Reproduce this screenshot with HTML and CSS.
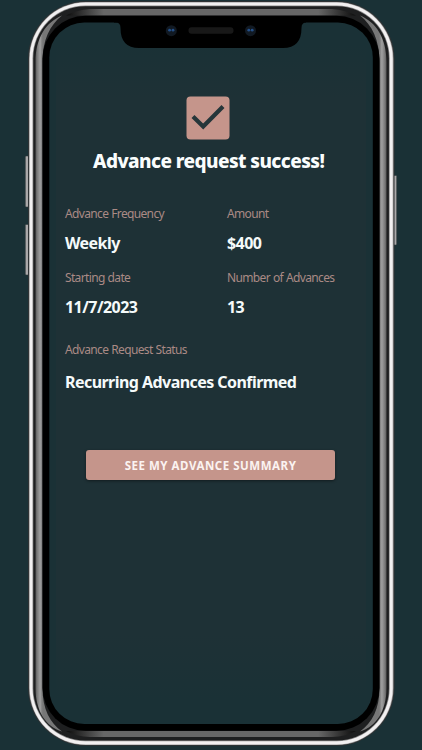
FILE: index.html
```html
<!DOCTYPE html>
<html lang="en">
<head>
  <meta charset="UTF-8" />
  <meta name="viewport" content="width=device-width, initial-scale=1.0"/>
  <title>Advance request success</title>
  <link rel="stylesheet" href="styles.css">
</head>
<body>

  <!-- Phone body -->
  <svg class="phone" viewBox="0 0 422 750" aria-hidden="true">
    <defs>
      <linearGradient id="side" gradientUnits="userSpaceOnUse" x1="35" x2="43" y1="0" y2="0">
        <stop offset="0" stop-color="#4c4c4c"/>
        <stop offset="0.25" stop-color="#777"/>
        <stop offset="0.65" stop-color="#a0a0a0"/>
        <stop offset="0.85" stop-color="#828282"/>
        <stop offset="1" stop-color="#777"/>
      </linearGradient>
      <linearGradient id="rail" x1="0" x2="1" y1="0" y2="0">
        <stop offset="0" stop-color="#0c0c0c"/>
        <stop offset="0.13" stop-color="#676767"/>
        <stop offset="0.87" stop-color="#676767"/>
        <stop offset="1" stop-color="#0c0c0c"/>
      </linearGradient>
      <linearGradient id="panel" x1="0" x2="0" y1="0" y2="1">
        <stop offset="0" stop-color="#1a3136"/>
        <stop offset="0.08" stop-color="#1e3136"/>
        <stop offset="0.9" stop-color="#1e3136"/>
        <stop offset="1" stop-color="#1a3136"/>
      </linearGradient>
      <path id="sideband" d="M62 15.500C46 22 35.500 38 35.500 62V688C35.500 711 46 727 62 731.500C50 723 42.500 709 42.500 688V62C42.500 40 50 25 62 15.500Z"/>
    </defs>

    <!-- side buttons -->
    <g fill="#aaa9aa" stroke="#333a3c" stroke-width="0.6">
      <rect x="25.3" y="156" width="5" height="51" rx="1"/>
      <rect x="25.3" y="224.5" width="5" height="50.5" rx="1"/>
      <rect x="392" y="175.5" width="4.7" height="69.5" rx="1"/>
    </g>

    <!-- metal frame, outside in -->
    <rect x="28" y="1" width="366.5" height="744.8" rx="58" fill="#303335"/>
    <rect x="29" y="2" width="364.5" height="743" rx="57" fill="#9b9b9b"/>
    <rect x="29.7" y="2.5" width="363" height="742" rx="56" fill="#f2f0f1"/>
    <rect x="32.5" y="5.5" width="357.2" height="735.8" rx="53" fill="#8b8b8b"/>
    <rect x="33.3" y="6.2" width="355.6" height="734.3" rx="52" fill="#1e1f20"/>
    <path d="M90 9H332Q346 10 356 15.500H66Q76 10 90 9Z" fill="url(#rail)"/>
    <path d="M66 731H356Q346 736.500 332 737H90Q76 736.500 66 731Z" fill="url(#rail)"/>
    <use href="#sideband" fill="url(#side)"/>
    <use href="#sideband" fill="url(#side)" transform="translate(422 0) scale(-1 1)"/>
    <rect x="42.5" y="15.8" width="337" height="715" rx="43" fill="#000"/>

    <!-- screen -->
    <rect x="49.3" y="22.5" width="323.5" height="701.5" rx="35" fill="#1a3136"/>
    <rect x="56" y="45" width="310" height="655" fill="url(#panel)"/>

    <!-- notch -->
    <path d="M114 22.500H116Q120.500 22.500 120.500 28Q120.500 48 139 48H283Q301.500 48 301.500 28Q301.500 22.500 306 22.500V20H114Z" fill="#000"/>
    <rect x="188.5" y="27.3" width="45" height="6.5" rx="3" fill="#181818"/>
    <g fill="#111922">
      <circle cx="171.3" cy="30.7" r="5.5"/>
      <circle cx="250.5" cy="30.7" r="5.5"/>
    </g>
    <g fill="#234f89">
      <circle cx="169.6" cy="30.2" r="1.4"/>
      <circle cx="173" cy="30.2" r="1.4"/>
      <circle cx="248.8" cy="30.2" r="1.4"/>
      <circle cx="252.2" cy="30.2" r="1.4"/>
    </g>
  </svg>

  <main class="screen">
    <svg class="check" viewBox="0 0 44 44" aria-hidden="true">
      <rect x="0.5" y="0.5" width="43" height="43" rx="4" fill="#c5958b"/>
      <path d="M7 20.500L17.200 30.500L37 10.500" fill="none" stroke="#25363a" stroke-width="4.2"/>
    </svg>
    <h1>Advance request success!</h1>

    <div class="details">
      <div class="item">
        <div class="label">Advance Frequency</div>
        <div class="value">Weekly</div>
      </div>
      <div class="item">
        <div class="label">Amount</div>
        <div class="value">$400</div>
      </div>
      <div class="item">
        <div class="label">Starting date</div>
        <div class="value">11/7/2023</div>
      </div>
      <div class="item">
        <div class="label">Number of Advances</div>
        <div class="value">13</div>
      </div>
      <div class="item status">
        <div class="label">Advance Request Status</div>
        <div class="value">Recurring Advances Confirmed</div>
      </div>
    </div>

    <button class="summary-btn">SEE MY ADVANCE SUMMARY</button>
  </main>

</body>
</html>
```

FILE: styles.css
```css
body {
  margin: 0;
  width: 422px;
  height: 750px;
  overflow: hidden;
  background: #1a3136;
  font-family: "Noto Sans", "Open Sans", sans-serif;
}
/* the phone lies behind the screen content */
.phone {
  position: absolute;
  top: 0;
  left: 0;
  width: 422px;
  height: 750px;
  z-index: -1;
}
.screen {
  display: flex;
  flex-direction: column;
  width: 324px;
  margin-left: 49px;
  padding-top: 96px;
}
.check {
  width: 44px;
  height: 44px;
  margin-left: 137px;
}
h1 {
  margin: 8px 0 0 44px;
  color: #fafdfd;
  font-size: 19px;
  line-height: 26px;
  font-weight: 800;
  letter-spacing: -0.57px;
  white-space: nowrap;
}
.details {
  display: grid;
  grid-template-columns: 162px 146px;
  margin: 31px 0 0 16px;
}
.item {
  height: 64px;
}
.label {
  color: #aa8a85;
  font-size: 12px;
  line-height: 18px;
  letter-spacing: -0.65px;
  word-spacing: 0.5px;
  white-space: nowrap;
}
.value {
  margin-top: 8px;
  color: #f5fafa;
  font-size: 16px;
  line-height: 24px;
  font-weight: 680;
  letter-spacing: -0.55px;
  white-space: nowrap;
}
.status {
  grid-column: 1 / 3;
  margin-top: 8px;
}
.status .value {
  margin-top: 11px;
}
.summary-btn {
  width: 249px;
  height: 30px;
  margin: 45px 0 0 37px;
  padding: 0;
  border: none;
  border-radius: 3px;
  background: #c5958b;
  color: #fbf3f1;
  box-shadow: 0 1px 3px rgba(0, 0, 0, 0.45);
  font-family: inherit;
  font-size: 11.5px;
  font-weight: 700;
  letter-spacing: 0.53px;
}
```
